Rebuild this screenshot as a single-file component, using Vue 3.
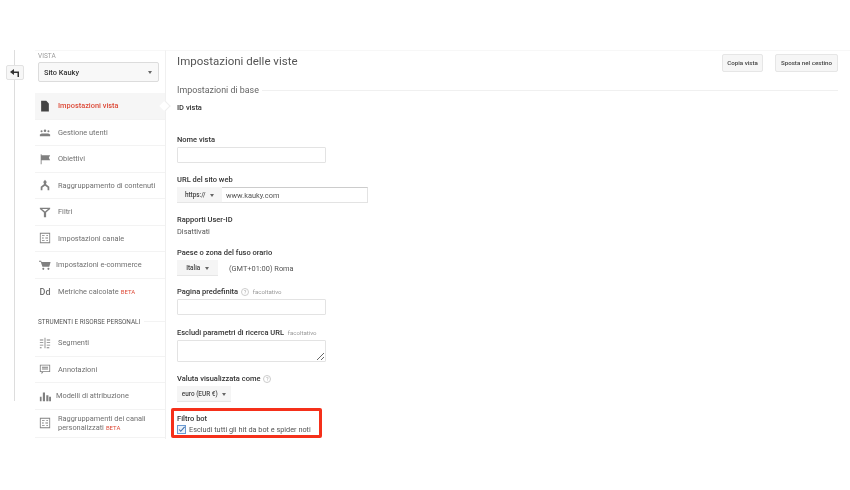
<script setup>
const icons = {
  doc: 'M2.500 1h6l3 3v9.500h-9z',
  users:
    'M1 12V9.800l2.200-1h7.600l2.200 1V12zM7 4a1.500 1.500 0 1 1 0 3 1.500 1.500 0 0 1 0-3zM3 5a1.200 1.200 0 1 1 0 2.400A1.200 1.200 0 0 1 3 5zm8 0a1.200 1.200 0 1 1 0 2.400A1.200 1.200 0 0 1 11 5z',
  flag: 'M2 1.500h1V13H2zM3 2.500h10L11.500 5.500 13 8.500H3z',
  group: 'M7 1 9.500 4H8.300v2L12 9v4h-2V10L7 7.800 4 10v3H2V9l3.700-3V4H4.500z',
  filter: 'M1 2h12v1.500L8.300 7.500V13H5.700V7.500L1 3.500zM3.500 3.500 7 6.500l3.500-3z',
  channel:
    'M1 1h12v12H1zM2 2v10h10V2zM3.500 3.500h3v1h-3zM8.500 3.500h2v1h-2zM3.500 6.500h2v1h-2zM7.500 6.500h3v1h-3zM3.500 9.500h3v1h-3zM8.500 9.500h2v1h-2z',
  cart: 'M0 2h2.500l.5 1.500h10.500L12 9H4L2 3.200H0zM5 10.300a1.200 1.200 0 1 1 0 2.400 1.200 1.200 0 0 1 0-2.400zm6 0a1.200 1.200 0 1 1 0 2.400 1.200 1.200 0 0 1 0-2.400z',
  segments:
    'M6.500 1h1v12h-1zM1 3h4v1H1zM1 6h4v1H1zM1 9h4v1H1zM1 12h2v1H1zM9 3h4v1H9zM9 6h4v1H9zM9 9h4v1H9zM9 12h3v1H9z',
  note: 'M1 2h12v8.500H5L3 13v-2.500H1zM2 3v6.500h10V3zM3.500 4.500h7v1h-7zM3.500 6.500h7v1h-7z',
  bars: 'M1 8h2v5H1zM4.500 3H7v10H4.500zM8.500 6H11v7H8.500zM11.800 8H14v5h-2.200z',
}

const viewItems = [
  { label: 'Impostazioni vista', icon: 'doc', active: true },
  { label: 'Gestione utenti', icon: 'users' },
  { label: 'Obiettivi', icon: 'flag' },
  { label: 'Raggruppamento di contenuti', icon: 'group' },
  { label: 'Filtri', icon: 'filter' },
  { label: 'Impostazioni canale', icon: 'channel' },
  { label: 'Impostazioni e-commerce', icon: 'cart', tight: true },
  { label: 'Metriche calcolate', icon: 'dd', beta: true, plain: true },
]

const toolItems = [
  { label: 'Segmenti', icon: 'segments' },
  { label: 'Annotazioni', icon: 'note' },
  { label: 'Modelli di attribuzione', icon: 'bars', tight: true },
  { label: 'Raggruppamenti dei canali personalizzati', icon: 'channel', beta: true, tall: true },
]

const navGroups = [viewItems, toolItems]
</script>

<template>
  <div class="page">
    <div class="rail">
      <button class="back" type="button" aria-label="Indietro">
        <svg width="10" height="8" viewBox="0 0 10 8">
          <path d="M4 0 0 3l4 3V4h3.500v4H9V2.600H4z" fill="#333" />
        </svg>
      </button>
    </div>

    <aside class="sidebar">
      <div class="small-label">VISTA</div>
      <div class="view-select">
        <span>Sito Kauky</span>
        <i class="caret"></i>
      </div>

      <template v-for="(group, index) in navGroups" :key="index">
        <div v-if="index === 1" class="tools-heading">
          <span>STRUMENTI E RISORSE PERSONALI</span>
        </div>
        <ul class="nav" :class="{ first: index === 0 }">
          <li
            v-for="item in group"
            :key="item.label"
            :class="{ active: item.active, tight: item.tight, plain: item.plain, tall: item.tall }"
          >
            <span class="nav-icon">
              <b v-if="item.icon === 'dd'" class="dd">Dd</b>
              <svg v-else width="12" height="12" viewBox="0 0 14 14">
                <path :d="icons[item.icon]" fill-rule="evenodd" />
              </svg>
            </span>
            <span class="nav-label">{{ item.label }}<em v-if="item.beta">BETA</em></span>
          </li>
        </ul>
      </template>
    </aside>

    <main class="content">
      <header class="title-row">
        <h1>Impostazioni delle viste</h1>
        <div class="actions">
          <button type="button" class="btn copy">Copia vista</button>
          <button type="button" class="btn">Sposta nel cestino</button>
        </div>
      </header>

      <div class="section-title"><span>Impostazioni di base</span></div>

      <div class="field id-field"><label>ID vista</label></div>

      <div class="field name-field">
        <label>Nome vista</label>
        <input class="text-input" type="text" />
      </div>

      <div class="field url-field">
        <label>URL del sito web</label>
        <div class="url-group">
          <div class="select url-select">https:// <i class="caret"></i></div>
          <input class="url-input" type="text" value="www.kauky.com" />
        </div>
      </div>

      <div class="field user-field">
        <label>Rapporti User-ID</label>
        <p>Disattivati</p>
      </div>

      <div class="field tz-field">
        <label>Paese o zona del fuso orario</label>
        <div class="tz-row">
          <div class="select tz-select">Italia <i class="caret"></i></div>
          <span>(GMT+01:00) Roma</span>
        </div>
      </div>

      <div class="field page-field">
        <label>Pagina predefinita <i class="help">?</i> <small>facoltativo</small></label>
        <input class="text-input" type="text" />
      </div>

      <div class="field params-field">
        <label>Escludi parametri di ricerca URL <small>facoltativo</small></label>
        <textarea class="text-area"></textarea>
      </div>

      <div class="field currency-field">
        <label>Valuta visualizzata come <i class="help">?</i></label>
        <div class="select currency-select">euro (EUR €) <i class="caret"></i></div>
      </div>

      <div class="bot-box">
        <label>Filtro bot</label>
        <div class="check-row">
          <span class="checkbox">
            <svg width="9" height="9" viewBox="0 0 9 9">
              <path d="M1.500 4.500 3.500 6.800 8.500 1" fill="none" stroke="#3f6fa8" stroke-width="1.400" />
            </svg>
          </span>
          <span>Escludi tutti gli hit da bot e spider noti</span>
        </div>
      </div>
    </main>
  </div>
</template>

<style>
html,
body {
  margin: 0;
  background: #ffffff;
}
</style>

<style scoped>
.page {
  display: flex;
  width: 850px;
  height: 490px;
  padding-top: 50px;
  box-sizing: border-box;
  overflow: hidden;
  background: #ffffff;
  color: #555555;
  font-family: Roboto, "Liberation Sans", sans-serif;
  font-size: 7.400px;
  filter: blur(0.3px);
}

.rail {
  position: relative;
  flex: 0 0 35px;
  height: 351px;
}

.rail::before {
  content: "";
  position: absolute;
  left: 14px;
  top: 0;
  bottom: 0;
  width: 1px;
  background: #dddddd;
}

.back {
  position: absolute;
  left: 6px;
  top: 15px;
  display: flex;
  align-items: center;
  justify-content: center;
  width: 18px;
  height: 15px;
  padding: 0;
  background: #f7f7f7;
  border: 1px solid #e2e2e2;
  border-radius: 2px;
}

.sidebar {
  flex: 0 0 130px;
  height: 388px;
  border-right: 1px solid #f0f0f0;
  border-top: 1px solid #f7f7f7;
}

.small-label {
  margin: 1px 0 0 3px;
  color: #9a9a9a;
  font-size: 6.500px;
  line-height: 8px;
}

.view-select {
  display: flex;
  align-items: center;
  justify-content: space-between;
  box-sizing: border-box;
  width: 121px;
  height: 20px;
  margin: 2px 0 0 3px;
  padding: 0 6px 0 5px;
  color: #333333;
  background: #f8f8f8;
  border: 1px solid #dcdcdc;
  border-radius: 2px;
  font-size: 7.400px;
  font-weight: 500;
}

.caret {
  display: inline-block;
  width: 0;
  height: 0;
  border-left: 2.500px solid transparent;
  border-right: 2.500px solid transparent;
  border-top: 3px solid #666666;
  vertical-align: middle;
}

.nav {
  margin: 0;
  padding: 0;
  list-style: none;
}

.nav.first {
  margin-top: 11px;
}

.nav li {
  display: flex;
  align-items: center;
  height: 26.500px;
  box-sizing: border-box;
  padding-left: 3px;
  color: #707070;
  border-bottom: 1px solid #f3f3f3;
}

.nav li.plain {
  border-bottom: 0;
}

.nav li.active {
  position: relative;
  color: #dd4b39;
  background: #f6f6f6;
  font-weight: 500;
}

.nav li.active::after {
  content: "";
  position: absolute;
  right: -4px;
  top: 9px;
  width: 7px;
  height: 7px;
  background: #ffffff;
  border-top: 1px solid #eeeeee;
  border-right: 1px solid #eeeeee;
  transform: rotate(45deg);
}

.nav li.tall {
  height: 28px;
  line-height: 9.500px;
}

.nav-icon {
  display: flex;
  align-items: center;
  justify-content: center;
  flex: 0 0 14px;
  margin-right: 6px;
}

.nav-icon svg {
  fill: #808080;
}

.nav li.active .nav-icon svg {
  fill: #444444;
}

.nav li.tight .nav-icon {
  margin-right: 4px;
}

.dd {
  color: #707070;
  font-size: 9px;
  font-weight: 500;
}

.nav-label {
  max-width: 106px;
}

.nav-label em {
  margin-left: 2px;
  color: #dd4b39;
  font-size: 6px;
  font-style: normal;
}

.tools-heading {
  display: flex;
  align-items: center;
  gap: 4px;
  margin: 11.500px 0 3.500px 3px;
  color: #555555;
  font-size: 6.400px;
  line-height: 10px;
}

.tools-heading::after {
  content: "";
  flex: 1;
  height: 1px;
  background: #f3f3f3;
}

.content {
  flex: 1;
  min-width: 0;
  padding: 0 12px 0 11px;
  border-top: 1px solid #f7f7f7;
}

.title-row {
  display: flex;
  justify-content: space-between;
  align-items: flex-start;
  padding-top: 3px;
}

h1 {
  margin: 0;
  color: #555555;
  font-size: 11.500px;
  font-weight: 400;
  line-height: 15px;
}

.actions {
  display: flex;
  gap: 12px;
}

.btn {
  height: 18px;
  padding: 0 5px;
  color: #444444;
  background: #f6f6f6;
  border: 1px solid #e6e6e6;
  border-radius: 2px;
  font-family: inherit;
  font-size: 6.200px;
  font-weight: 500;
}

.btn.copy {
  padding: 0 4px;
}

.section-title {
  display: flex;
  align-items: center;
  gap: 3px;
  margin-top: 12px;
  color: #666666;
  font-size: 8.900px;
  line-height: 12px;
}

.section-title::after {
  content: "";
  flex: 1;
  height: 1px;
  background: #f0f0f0;
}

.field label,
.bot-box label {
  display: block;
  color: #333333;
  font-size: 7.500px;
  font-weight: 500;
  line-height: 10px;
}

.field label {
  padding-top: 1px;
  margin-bottom: -1px;
}

.field small {
  margin-left: 2px;
  color: #999999;
  font-size: 6.100px;
  font-weight: 400;
}

.help {
  display: inline-block;
  box-sizing: border-box;
  width: 8px;
  height: 8px;
  margin-left: 1px;
  color: #aaaaaa;
  border: 1px solid #cccccc;
  border-radius: 50%;
  font-size: 5.500px;
  font-style: normal;
  font-weight: 400;
  line-height: 6px;
  text-align: center;
}

.text-input {
  display: block;
  box-sizing: border-box;
  width: 149px;
  height: 16px;
  margin: 3px 0 0;
  padding: 0 3px;
  background: #ffffff;
  border: 1px solid #e3e3e3;
  border-radius: 1px;
  outline: none;
}

.id-field {
  margin-top: 6px;
}

.name-field {
  margin-top: 22px;
}

.url-field,
.user-field,
.tz-field {
  margin-top: 11px;
}

.url-group {
  display: flex;
  width: 191px;
  height: 16px;
  margin-top: 3px;
}

.select {
  box-sizing: border-box;
  height: 16px;
  color: #444444;
  background: #f5f5f5;
  border-bottom: 1px solid #e6e6e6;
  font-size: 6.400px;
  font-weight: 500;
  line-height: 16px;
  text-align: center;
}

.select .caret {
  margin-left: 3px;
}

.url-select {
  flex: 0 0 45px;
}

.url-input {
  flex: 1;
  min-width: 0;
  box-sizing: border-box;
  height: 16px;
  padding: 0 4px;
  color: #555555;
  background: #ffffff;
  border: 1px solid #e3e3e3;
  border-top-color: #cccccc;
  border-left: 0;
  outline: none;
  font-family: inherit;
  font-size: 7.400px;
}

.user-field p {
  margin: 3px 0 0;
  color: #555555;
  line-height: 10px;
}

.user-field + .tz-field {
  margin-top: 10px;
}

.tz-row {
  display: flex;
  align-items: center;
  gap: 11px;
  margin-top: 3px;
}

.tz-select {
  width: 41px;
}

.page-field {
  margin-top: 10px;
}

.params-field {
  margin-top: 12px;
}

.text-area {
  display: block;
  box-sizing: border-box;
  width: 149px;
  height: 22px;
  margin: 3px 0 0;
  padding: 0;
  background: #ffffff;
  border: 1px solid #e3e3e3;
  border-radius: 1px;
  outline: none;
}

.currency-field {
  margin-top: 11px;
}

.currency-select {
  width: 54px;
  margin-top: 3px;
}

.bot-box {
  box-sizing: border-box;
  width: 151px;
  height: 30px;
  margin: 6px 0 0 -6px;
  padding: 2.500px 0 0 3px;
  background: #ffffff;
  border: 3px solid #f5301a;
  border-radius: 2px;
}

.check-row {
  display: flex;
  align-items: center;
  gap: 3px;
  margin-top: 1.500px;
  font-size: 7.300px;
  line-height: 9px;
  white-space: nowrap;
}

.checkbox {
  display: flex;
  align-items: center;
  justify-content: center;
  box-sizing: border-box;
  width: 9px;
  height: 9px;
  background: #eaf2fb;
  border: 1px solid #6a9ad2;
}
</style>
